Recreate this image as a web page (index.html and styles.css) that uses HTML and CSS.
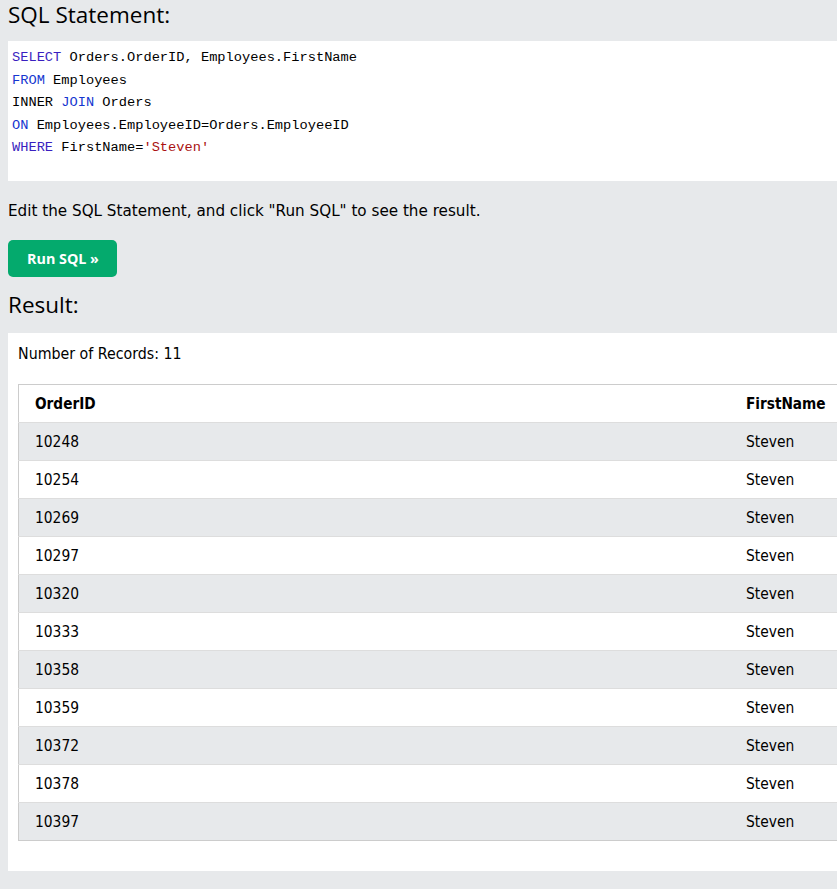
FILE: index.html
```html
<!DOCTYPE html>
<html>
<head>
<meta charset="utf-8">
<link rel="stylesheet" href="styles.css">
</head>
<body>
<div class="page">
  <h2 class="title">SQL Statement:</h2>
  <div class="code">
    <div class="line"><span class="kw1">SELECT</span> Orders.OrderID, Employees.FirstName</div>
    <div class="line"><span class="kw2">FROM</span> Employees</div>
    <div class="line">INNER <span class="kw2">JOIN</span> Orders</div>
    <div class="line"><span class="kw2">ON</span> Employees.EmployeeID=Orders.EmployeeID</div>
    <div class="line"><span class="kw1">WHERE</span> FirstName=<span class="str">'Steven'</span></div>
  </div>
  <p class="hint">Edit the SQL Statement, and click "Run SQL" to see the result.</p>
  <button class="run">Run SQL »</button>
  <h2 class="title result-title">Result:</h2>
  <div class="result">
    <div class="count">Number of Records: 11</div>
    <table class="grid">
      <tr><th class="c1">OrderID</th><th>FirstName</th></tr>
      <tr><td>10248</td><td>Steven</td></tr>
      <tr><td>10254</td><td>Steven</td></tr>
      <tr><td>10269</td><td>Steven</td></tr>
      <tr><td>10297</td><td>Steven</td></tr>
      <tr><td>10320</td><td>Steven</td></tr>
      <tr><td>10333</td><td>Steven</td></tr>
      <tr><td>10358</td><td>Steven</td></tr>
      <tr><td>10359</td><td>Steven</td></tr>
      <tr><td>10372</td><td>Steven</td></tr>
      <tr><td>10378</td><td>Steven</td></tr>
      <tr><td>10397</td><td>Steven</td></tr>
    </table>
  </div>
</div>
</body>
</html>
```
FILE: styles.css
```css
html, body {
  margin: 0;
  padding: 0;
  background: #e7e9eb;
  overflow: hidden;
}
.page {
  width: 900px;
  padding: 0 0 0 8px;
  display: flex;
  flex-direction: column;
  align-items: flex-start;
  font-family: "DejaVu Sans Condensed", "DejaVu Sans", sans-serif;
  font-stretch: condensed;
  color: #000;
}
.title {
  margin: 0;
  height: 41px;
  font-family: "Open Sans", sans-serif;
  font-stretch: normal;
  font-weight: 400;
  font-size: 22.5px;
  line-height: 30px;
  color: #000;
}
.code {
  align-self: stretch;
  height: 140px;
  box-sizing: border-box;
  background: #fff;
  padding: 6px 4px 4px;
  font-family: "Liberation Mono", monospace;
  font-stretch: normal;
  font-size: 13.7px;
  line-height: 22.5px;
  color: #000;
}
.kw1 { color: #3a1fc0; }
.kw2 { color: #1536d0; }
.str { color: #a11; }
.hint {
  margin: 18px 0 17px;
  font-family: "DejaVu Sans", sans-serif;
  font-stretch: normal;
  font-size: 15.2px;
  line-height: 24px;
}
.run {
  width: 109px;
  height: 37px;
  border: none;
  border-radius: 5px;
  background: #04aa6d;
  color: #fff;
  font-family: "Open Sans", sans-serif;
  font-weight: 700;
  font-size: 14.3px;
  padding: 0 0 0 1px;
  margin-bottom: 13px;
}
.result-title {
  height: 43px;
}
.result {
  align-self: stretch;
  background: #fff;
  padding: 10px 10px 30px;
}
.count {
  font-size: 15.8px;
  line-height: 22px;
  margin-bottom: 19px;
}
.grid {
  border-collapse: collapse;
  width: 880px;
  border: 1px solid #ccc;
  font-size: 15.4px;
}
.grid th, .grid td {
  height: 37px;
  padding: 0 16px;
  text-align: left;
  border-bottom: 1px solid #ddd;
}
.grid th { font-weight: 700; font-size: 15.2px; }
.grid .c1 { width: 679px; }
.grid tr:nth-child(even) { background: #e7e9eb; }
.grid tr:last-child td { border-bottom: 1px solid #ccc; }
```
